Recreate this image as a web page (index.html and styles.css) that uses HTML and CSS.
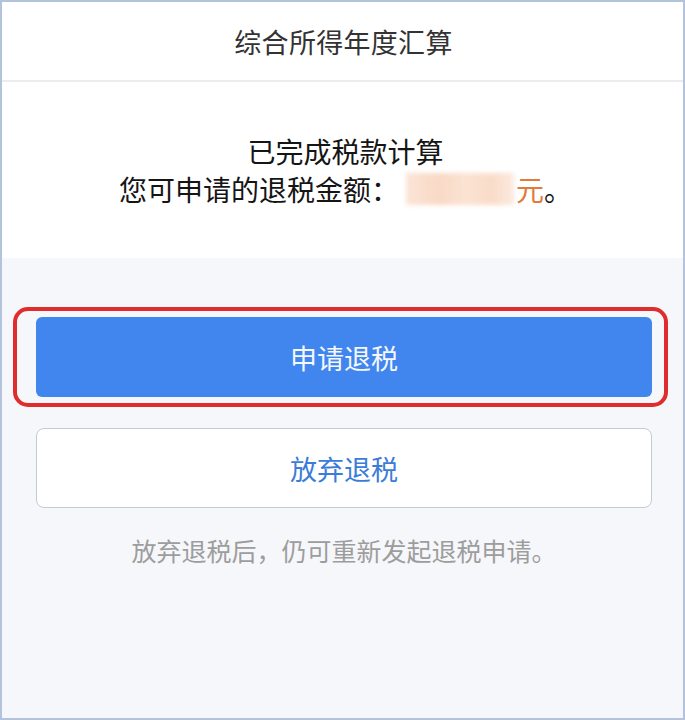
FILE: index.html
```html
<!DOCTYPE html>
<html lang="zh-CN">
<head>
<meta charset="utf-8">
<title>综合所得年度汇算</title>
<link rel="stylesheet" href="styles.css">
</head>
<body>
<div class="app">
  <header class="topbar">
    <h1 class="title">综合所得年度汇算</h1>
  </header>
  <section class="summary">
    <p class="line">已完成税款计算</p>
    <p class="line">您可申请的退税金额：<span class="amount" aria-label="金额已隐藏"></span><span class="unit">元</span>。</p>
  </section>
  <section class="actions">
    <div class="primary-wrap">
      <button class="btn btn-primary">申请退税</button>
      <span class="highlight"></span>
    </div>
    <button class="btn btn-secondary">放弃退税</button>
    <p class="note">放弃退税后，仍可重新发起退税申请。</p>
  </section>
</div>
</body>
</html>
```
FILE: styles.css
```css
* { box-sizing: border-box; }
html, body {
  margin: 0;
  padding: 0;
  background: #ffffff;
}
body {
  font-family: "Noto Sans CJK SC", "Noto Sans", sans-serif;
}
.app {
  width: 685px;
  height: 720px;
  border: 2px solid #b3c3db;
  background: #f5f7fa;
  display: flex;
  flex-direction: column;
  overflow: hidden;
}
.topbar {
  height: 80px;
  background: #ffffff;
  border-bottom: 2px solid #eaecef;
  display: flex;
  align-items: center;
  justify-content: center;
  flex-shrink: 0;
}
.title {
  margin: 0;
  font-size: 27px;
  font-weight: 400;
  color: #333333;
  letter-spacing: 0.3px;
  padding-left: 2px;
}
.summary {
  background: #ffffff;
  height: 176px;
  padding-top: 50px;
  display: flex;
  flex-direction: column;
  align-items: center;
  flex-shrink: 0;
}
.line {
  margin: 0;
  font-size: 28px;
  line-height: 38px;
  color: #151515;
  display: flex;
  align-items: center;
  padding-left: 6px;
}
.amount {
  display: inline-block;
  width: 108px;
  height: 32px;
  margin: 0 2px 0 7px;
  background: linear-gradient(90deg, #fbe5d6 0%, #f8d9c6 30%, #fbe3d2 55%, #f9dcc9 80%, #fcebe0 100%);
  filter: blur(2px);
}
.unit {
  color: #e27a3c;
}
.actions {
  padding: 59px 31px 0 34px;
  display: flex;
  flex-direction: column;
  align-items: stretch;
}
.primary-wrap {
  position: relative;
}
.btn {
  display: block;
  width: 100%;
  height: 80px;
  font-family: inherit;
  font-size: 27px;
  border-radius: 8px;
  cursor: pointer;
}
.btn-primary {
  background: #4186ee;
  color: #f4f7fc;
  border: none;
  border-radius: 6px;
}
.highlight {
  position: absolute;
  left: -23px;
  top: -10px;
  right: -16px;
  bottom: -10px;
  border: 4px solid #df2d2d;
  border-radius: 15px;
  pointer-events: none;
}
.btn-secondary {
  margin-top: 31px;
  background: #ffffff;
  color: #3b7cd8;
  border: 1.5px solid #c6cbd3;
}
.note {
  margin: 25px 0 0;
  text-align: center;
  font-size: 25px;
  line-height: 34px;
  color: #9d9d9d;
}
```
